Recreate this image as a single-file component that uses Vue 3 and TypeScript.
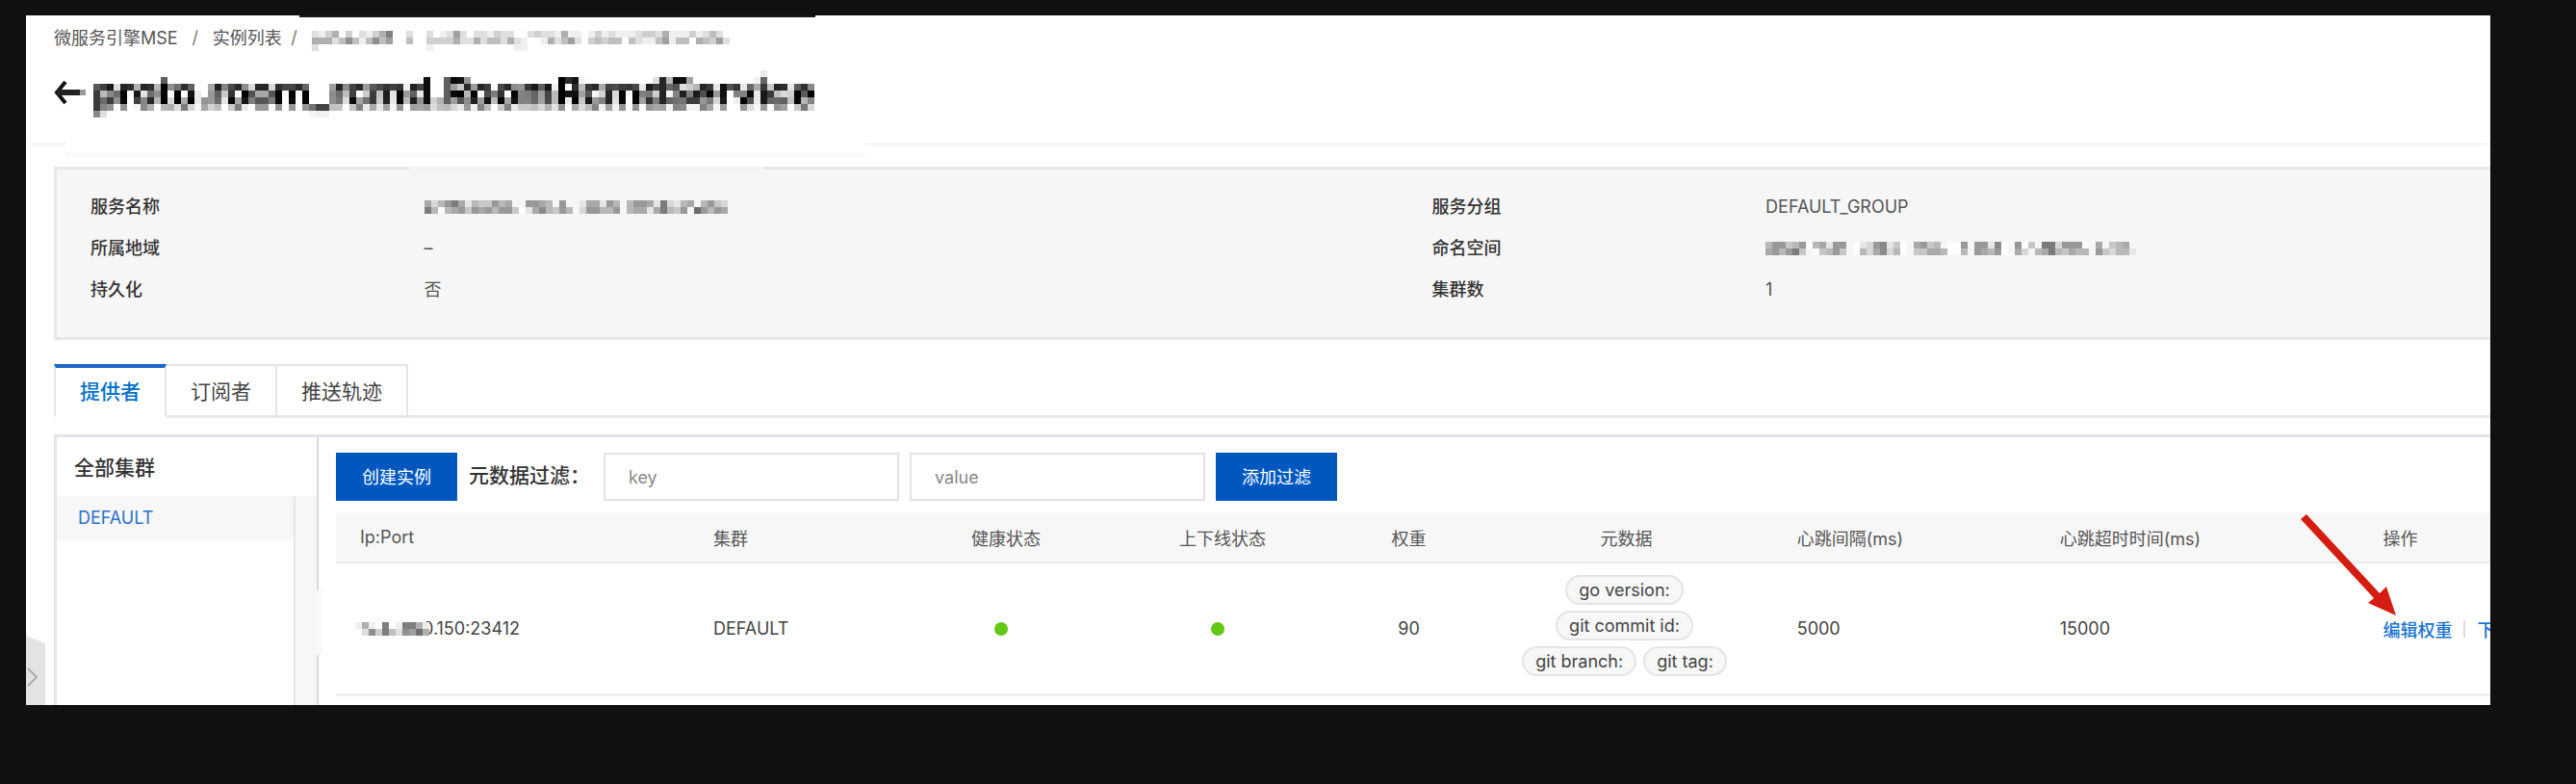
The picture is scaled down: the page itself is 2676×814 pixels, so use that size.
<script setup lang="ts">
import { ref } from 'vue'

interface Cell { x: number; y: number; fill: string }
interface Mosaic { w: number; h: number; cells: Cell[] }

const CELL = 7

// Each digit is the darkness of one redaction block (0 = clear, w = white).
function mosaic(rows: string[]): Mosaic {
  const cells: Cell[] = []
  rows.forEach((row, y) => {
    row.split('').forEach((c, x) => {
      if (c === '0') return
      const fill = c === 'w' ? '#fdfdfd' : `rgba(0, 0, 0, ${Number(c) / 16})`
      cells.push({ x: x * CELL, y: y * CELL, fill })
    })
  })
  return { w: Math.max(...rows.map(r => r.length)) * CELL, h: rows.length * CELL, cells }
}

const crumbMask = mosaic([
  '21350302135800200201262022132200232215110131211123325111312420',
  '55524741474600400333352252442521001524620343440421146144054362',
  '20000000000000000100000000000011000000000000000000000000000000',
])
const nameMask = mosaic([
  '524685143364500665406001551640466518214504632',
  '84w45636564663w157436402664460455158436096465',
])
const spaceMask = mosaic([
  '466346w451660w126713w056340ww606617w06w30882666w0503450',
  '5646830w34630w425724w033554ww406546w0520458435440632441',
])
const ipMask = mosaic(['15108018851', '02738427695'])

interface Field { label: string; value?: string; mask?: Mosaic }
const fields: Field[] = [
  { label: '服务名称', mask: nameMask },
  { label: '服务分组', value: 'DEFAULT_GROUP' },
  { label: '所属地域', value: '–' },
  { label: '命名空间', mask: spaceMask },
  { label: '持久化', value: '否' },
  { label: '集群数', value: '1' },
]

const tabs = ['提供者', '订阅者', '推送轨迹']
const active = ref(0)
const metaKey = ref('')
const metaValue = ref('')
const tags = ['go version:', 'git commit id:', 'git branch:', 'git tag:']
</script>

<template>
  <div class="stage">
    <svg class="defs" width="0" height="0" aria-hidden="true">
      <filter id="pixelate" filterUnits="userSpaceOnUse" x="0" y="0" width="1400" height="70" color-interpolation-filters="sRGB">
        <feConvolveMatrix in="SourceGraphic" order="7" kernelMatrix="1 1 1 1 1 1 1 1 1 1 1 1 1 1 1 1 1 1 1 1 1 1 1 1 1 1 1 1 1 1 1 1 1 1 1 1 1 1 1 1 1 1 1 1 1 1 1 1 1" divisor="38" edgeMode="none" result="avg" />
        <feFlood x="3" y="3" width="1" height="1" flood-color="#000" />
        <feComposite width="7" height="7" />
        <feTile result="dots" />
        <feComposite in="avg" in2="dots" operator="in" />
        <feMorphology operator="dilate" radius="3" />
      </filter>
    </svg>

    <main class="page">
      <header class="head">
        <nav class="crumbs">
          <a href="#">微服务引擎MSE</a><span class="sep">/</span><a href="#">实例列表</a><span class="sep">/</span>
          <svg class="mask" :width="crumbMask.w" :height="crumbMask.h" shape-rendering="crispEdges" aria-hidden="true">
            <rect v-for="(c, i) in crumbMask.cells" :key="i" :x="c.x" :y="c.y" width="7" height="7" :fill="c.fill" />
          </svg>
        </nav>
        <div class="title">
          <button class="back" type="button" aria-label="返回">
            <svg width="34" height="26" viewBox="0 0 34 26">
              <path d="M12 2 L3 13 L12 24" fill="none" stroke="#111" stroke-width="4" />
              <path d="M3 13 H27" stroke="#222" stroke-width="6" />
              <path d="M27 13 H33" stroke="#999" stroke-width="6" />
            </svg>
          </button>
          <h1>proto.room_rcmd.RoomRcmdService</h1>
        </div>
      </header>

      <dl class="info">
        <template v-for="f in fields" :key="f.label">
          <dt>{{ f.label }}</dt>
          <dd>
            <svg v-if="f.mask" class="mask" :width="f.mask.w" :height="f.mask.h" shape-rendering="crispEdges" aria-hidden="true">
              <rect v-for="(c, i) in f.mask.cells" :key="i" :x="c.x" :y="c.y" width="7" height="7" :fill="c.fill" />
            </svg>
            <template v-else>{{ f.value }}</template>
          </dd>
        </template>
      </dl>

      <div class="tabs" role="tablist">
        <button v-for="(t, i) in tabs" :key="t" type="button" role="tab" class="tab" :class="{ on: i === active }" :aria-selected="i === active" @click="active = i">{{ t }}</button>
      </div>

      <section class="frame">
        <aside class="side">
          <h2>全部集群</h2>
          <div class="side-body">
            <ul>
              <li><a href="#">DEFAULT</a></li>
            </ul>
          </div>
        </aside>

        <div class="content">
          <form class="tools" @submit.prevent>
            <button class="primary" type="button">创建实例</button>
            <label for="meta-key">元数据过滤：</label>
            <input id="meta-key" v-model="metaKey" type="text" placeholder="key">
            <input v-model="metaValue" type="text" placeholder="value" aria-label="value">
            <button class="primary" type="submit">添加过滤</button>
          </form>

          <table>
            <colgroup>
              <col class="c-ip"><col class="c-cluster"><col class="c-health"><col class="c-online"><col class="c-weight"><col class="c-meta"><col class="c-beat"><col class="c-timeout"><col class="c-ops">
            </colgroup>
            <thead>
              <tr>
                <th>Ip:Port</th>
                <th>集群</th>
                <th class="mid">健康状态</th>
                <th class="mid">上下线状态</th>
                <th class="mid">权重</th>
                <th class="mid">元数据</th>
                <th>心跳间隔(ms)</th>
                <th>心跳超时时间(ms)</th>
                <th>操作</th>
              </tr>
            </thead>
            <tbody>
              <tr>
                <td>
                  <div class="ip">
                    <svg class="mask" :width="ipMask.w" :height="ipMask.h" shape-rendering="crispEdges" aria-hidden="true">
                      <rect v-for="(c, i) in ipMask.cells" :key="i" :x="c.x" :y="c.y" width="7" height="7" :fill="c.fill" />
                    </svg>
                    <span>0.150:23412</span>
                  </div>
                </td>
                <td>DEFAULT</td>
                <td class="status"><i class="dot"></i></td>
                <td class="status"><i class="dot"></i></td>
                <td class="mid">90</td>
                <td class="meta">
                  <div class="tags"><span v-for="t in tags" :key="t" class="tag">{{ t }}</span></div>
                </td>
                <td>5000</td>
                <td>15000</td>
                <td>
                  <div class="ops">
                    <a href="#">编辑权重</a><span class="bar"></span><a href="#">下线</a>
                    <svg class="arrow" width="104" height="110" viewBox="0 0 104 110" aria-hidden="true">
                      <path d="M1 6 L7 1 L83 83 L90 76 L100 106 L71 93 L77 88 Z" fill="#d51c10" />
                    </svg>
                  </div>
                </td>
              </tr>
            </tbody>
          </table>
        </div>
      </section>

      <button class="handle" type="button" aria-label="展开">
        <svg width="20" height="72" viewBox="0 0 20 72">
          <path d="M0 0 L20 8 V72 H0 Z" fill="#e3e3e3" />
          <path d="M2 34 L11 43 L2 52" fill="none" stroke="#aaa" stroke-width="2" />
        </svg>
      </button>
    </main>
  </div>
</template>

<style>
body { margin: 0; background: #101010; }
</style>

<style scoped>
* { box-sizing: border-box; }
.stage {
  padding: 16px 89px 82px 27px;
  background: #101010;
  font-family: Inter, "Noto Sans CJK SC", sans-serif;
  font-size: 18px;
  color: #555;
}
.defs { position: absolute; }
.page { position: relative; overflow: hidden; background: #fff; }
.page::before {
  content: "";
  position: absolute;
  top: 0;
  left: 284px;
  width: 536px;
  height: 2px;
  background: #181818;
}
a { color: inherit; text-decoration: none; }
button { font: inherit; padding: 0; border: 0; cursor: pointer; }
.mask { display: block; flex: none; }

.head {
  position: relative;
  padding: 9px 29px 22px;
  box-shadow: 0 2px 6px rgba(0, 0, 0, 0.06);
}
.head::after {
  content: "";
  position: absolute;
  top: 128px;
  left: 41px;
  width: 830px;
  height: 14px;
  background: #fff;
  border-bottom: 5px solid #f8f8f8;
}
.crumbs { display: flex; align-items: center; height: 26px; color: #555; }
.sep { width: 36px; text-align: center; color: #777; }
.crumbs .sep:nth-of-type(2) { width: 16px; margin-right: 15px; text-align: right; }
.crumbs .mask { margin-top: 8px; }
.title { display: flex; align-items: center; height: 60px; margin-top: 15px; }
.back { display: flex; width: 34px; background: none; }
h1 {
  margin: 0 0 0 7px;
  font-size: 42px;
  line-height: 60px;
  font-weight: 600;
  color: #000;
  white-space: nowrap;
  filter: url(#pixelate);
}

.info {
  position: relative;
  display: grid;
  grid-template-columns: 13.9% 42% 13.9% 1fr;
  margin: 25px 0 0 29px;
  padding: 17px 0 28px 35px;
  border: 3px solid #e6e8eb;
  border-right: 0;
  background: #f6f6f6;
  line-height: 43px;
}
.info::before {
  content: "";
  position: absolute;
  top: -3px;
  left: 366px;
  width: 368px;
  height: 8px;
  background: #f4f4f4;
}
.info dt { color: #333; font-weight: 500; }
.info dd { display: flex; align-items: center; margin: 0; }

.tabs {
  display: flex;
  margin: 25px 0 17px 29px;
  height: 56px;
  box-shadow: inset 0 -3px #e8e8e8;
}
.tab {
  padding: 0 25px 2px;
  font-size: 21px;
  color: #444;
  background: #fff;
  border: 2px solid #e4e4e4;
  border-left-width: 0;
  border-bottom: 3px solid #e8e8e8;
}
.tab.on {
  padding: 0 25px 4px;
  font-weight: 500;
  color: #0070cc;
  border-left-width: 2px;
  border-top: 4px solid #1b66c4;
  border-bottom-color: #fff;
}

.frame {
  display: flex;
  margin-left: 29px;
  border: 3px solid #e3e4e9;
  border-width: 3px 0 0 3px;
}
.side {
  display: flex;
  flex-direction: column;
  flex: none;
  width: 272px;
  border-right: 2px solid #d9d9d9;
}
.side h2 {
  margin: 0;
  padding: 2px 0 0 18px;
  height: 61px;
  font-size: 21px;
  line-height: 60px;
  font-weight: 500;
  color: #333;
}
.side-body { position: relative; flex: 1; padding-right: 22px; background: #f7f7f7; }
.side-body::after {
  content: "";
  position: absolute;
  top: 98px;
  right: -6px;
  width: 8px;
  height: 67px;
  background: #f9f9f9;
}
.side ul {
  height: 100%;
  margin: 0;
  padding: 0;
  list-style: none;
  background: #fff;
  border-right: 2px solid #e6e6e6;
}
.side li { padding-left: 22px; line-height: 46px; background: #f7f7f7; color: #2a72cc; }

.content { flex: 1; min-width: 0; padding: 16px 0 9px 18px; }
.tools { display: flex; align-items: center; height: 50px; margin-bottom: 12px; }
.primary { width: 126px; height: 50px; padding-bottom: 2px; background: #0058bf; color: #fff; }
.tools label { margin: 0 14px 0 12px; padding-bottom: 6px; font-size: 21px; font-weight: 500; color: #333; }
.tools input {
  width: 307px;
  height: 50px;
  margin-right: 11px;
  padding: 0 24px;
  font: inherit;
  color: #333;
  background: #fff;
  border: 2px solid #e3e3e3;
  border-radius: 0;
}
.tools input::placeholder { color: #888; opacity: 1; }

table { width: 100%; table-layout: fixed; border-collapse: separate; border-spacing: 0; }
.c-ip { width: 16.4%; }
.c-cluster { width: 10%; }
.c-health { width: 9.4%; }
.c-online { width: 10.7%; }
.c-weight { width: 6.6%; }
.c-meta { width: 13.6%; }
.c-beat { width: 12.2%; }
.c-timeout { width: 15%; }
.c-ops { width: 6.1%; }
th, td { padding: 0 0 0 25px; text-align: left; font-weight: 400; white-space: nowrap; }
th { height: 53px; background: #f7f7f7; border-bottom: 2px solid #ebebeb; color: #555; }
td { height: 138px; border-bottom: 3px solid #efefef; color: #444; }
.mid { padding-left: 0; text-align: center; }
.ip { display: flex; align-items: center; margin-left: -5px; }
.ip .mask { position: relative; background: #fff; }
.ip span { margin-left: -7px; }
.status { padding: 0 10px 0 0; }
.dot { display: block; width: 14px; height: 14px; margin: 0 auto; border-radius: 50%; background: #62c715; }
.meta { padding: 0 32px 6px 28px; }
.tags { display: flex; flex-wrap: wrap; justify-content: center; gap: 6px 7px; }
.tag {
  height: 31px;
  padding: 0 12px;
  line-height: 27px;
  border: 2px solid #e4e4e4;
  border-radius: 16px;
  background: #f7f7f7;
}
.ops { position: relative; display: flex; align-items: center; font-weight: 500; color: #1a73cf; }
.bar { flex: none; width: 2px; height: 18px; margin: 0 12px; background: #dcdcdc; }
.ops a { flex: none; }
.arrow { position: absolute; left: -86px; bottom: 23px; pointer-events: none; }

.handle { position: absolute; left: 0; bottom: 0; display: flex; background: none; }
</style>
